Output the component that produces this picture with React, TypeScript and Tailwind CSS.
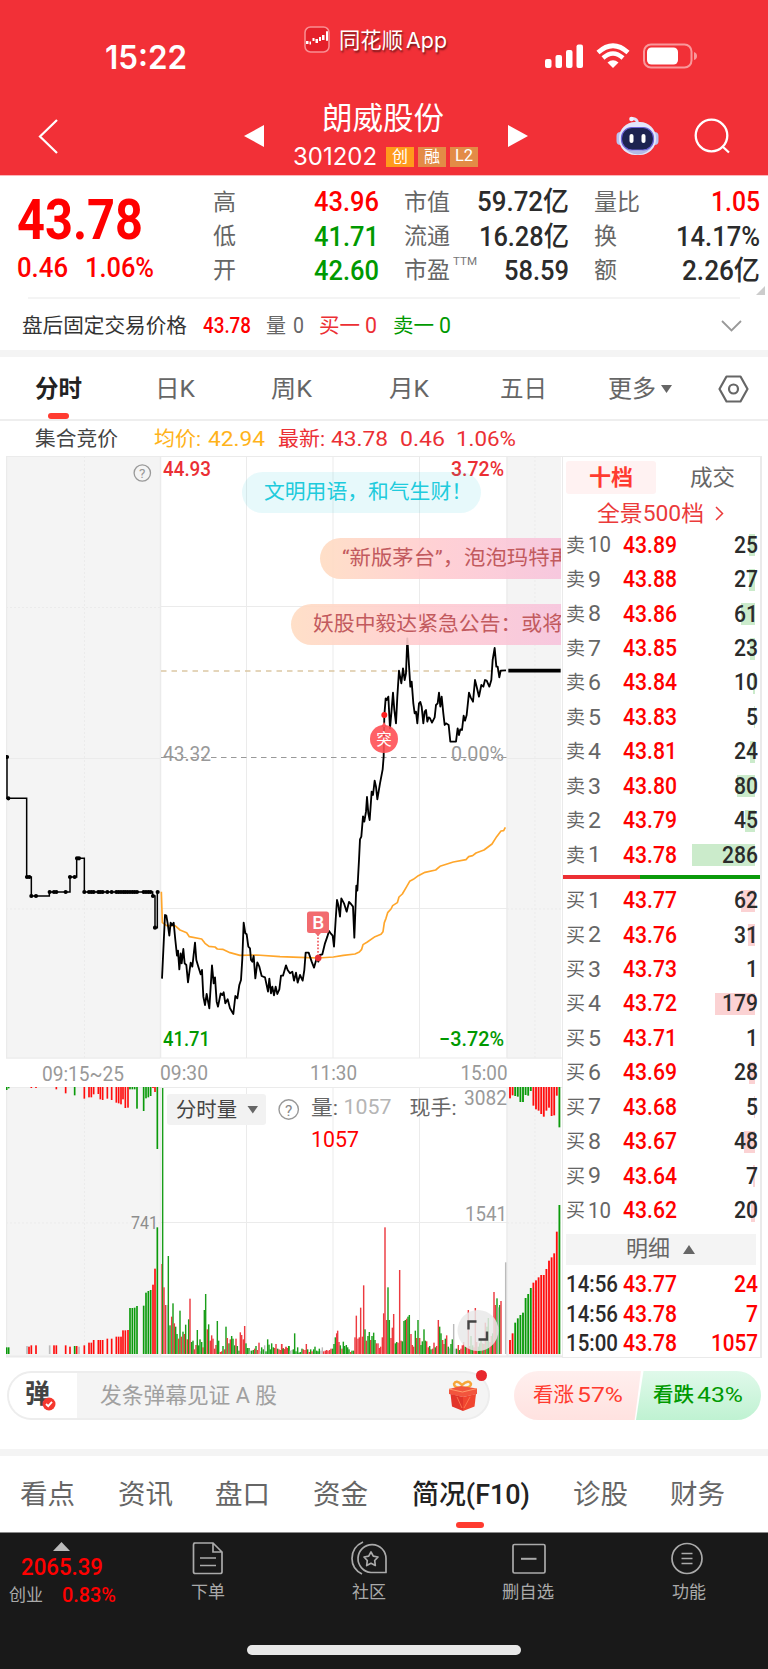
import { useLayoutEffect, useRef, useState, type ReactNode } from "react";

/** Single-line text squeezed or stretched to the width of its box. */
function Fit({ className = "", children }: { className?: string; children: ReactNode }) {
  const outer = useRef<HTMLSpanElement>(null);
  const inner = useRef<HTMLSpanElement>(null);
  const [scale, setScale] = useState(1);
  useLayoutEffect(() => {
    if (outer.current && inner.current && inner.current.offsetWidth) {
      setScale(outer.current.offsetWidth / inner.current.getBoundingClientRect().width);
    }
  }, []);
  return (
    <span ref={outer} className={`block shrink-0 whitespace-nowrap leading-none ${className}`}>
      <span ref={inner} className="inline-block origin-left" style={{ transform: `scaleX(${scale})` }}>
        {children}
      </span>
    </span>
  );
}

function StatusIcons() {
  return (
    <svg className="h-[26px] w-[153px]" viewBox="0 0 153 26" fill="none">
      <g fill="#fff">
        <rect x="0" y="16" width="6.5" height="9" rx="2" />
        <rect x="10.500" y="12" width="6.500" height="13" rx="2" />
        <rect x="21" y="7" width="6.500" height="18" rx="2" />
        <rect x="31.500" y="1.500" width="6.500" height="23.500" rx="2" />
        <path d="M68 25 L62.500 19.500 Q68 15 73.500 19.500 Z" />
      </g>
      <path d="M53 9.500 Q68 -4 83 9.500" stroke="#fff" strokeWidth="4.600" />
      <path d="M58 15 Q68 6 78 15" stroke="#fff" strokeWidth="4.400" />
      <rect x="99" y="1.500" width="47.500" height="23" rx="7" stroke="#fff" strokeOpacity=".5" strokeWidth="2" />
      <rect x="102" y="4.500" width="31" height="17" rx="4.500" fill="#fff" />
      <path d="M149 9 Q152 10 152 13 Q152 16 149 17 Z" fill="#fff" fillOpacity=".5" />
    </svg>
  );
}

function Robot() {
  return (
    <svg className="h-[40px] w-[43px]" viewBox="0 0 43 40" fill="none">
      <path d="M21 7 Q22 3 16 2.500" stroke="#dfe3fa" strokeWidth="3" strokeLinecap="round" />
      <circle cx="15.500" cy="3" r="2.300" fill="#eef0ff" />
      <rect x="0.500" y="16" width="8" height="13" rx="4" fill="#b9c3f1" />
      <rect x="34.500" y="16" width="8" height="13" rx="4" fill="#b9c3f1" />
      <rect x="3" y="6" width="37" height="33" rx="16" fill="#e3e6fb" />
      <path d="M6 29 Q12 38 22 38.500 Q32 38 37 29 Q30 35 21 35 Q12 35 6 29Z" fill="#b3b9e6" />
      <rect x="5.500" y="11.500" width="32" height="22.500" rx="10.500" fill="#1d2350" stroke="#6c63d8" strokeWidth="1.200" />
      <rect x="13.500" y="18" width="4" height="9" rx="2" fill="#fff" />
      <rect x="25.500" y="18" width="4" height="9" rx="2" fill="#fff" />
    </svg>
  );
}

function Header() {
  return (
    <header className="h-[176px] border-b border-[#fbb6ba] bg-[#f23037] text-white">
      <div className="flex h-[92px] items-start">
        <Fit className="mt-[42px] ml-[105px] w-[82px] font-['Inter'] text-[32px] font-semibold">15:22</Fit>
        <svg className="mt-[26px] ml-[117px] h-[27px] w-[26px]" viewBox="0 0 26 27">
          <rect x="1" y="1" width="24" height="25" rx="5.500" fill="#e5202a" stroke="#f98f93" strokeWidth="1.500" />
          <g fill="#fff">
            <rect x="2" y="15" width="2.500" height="3" />
            <rect x="5.500" y="15.500" width="1.500" height="3" />
            <rect x="8.500" y="12" width="2" height="3" />
            <rect x="11.500" y="13" width="2.500" height="4" />
            <rect x="15" y="11" width="2" height="4" />
            <rect x="18" y="9" width="2.500" height="5" />
            <rect x="22" y="5" width="2" height="10" rx="1" />
          </g>
        </svg>
        <div className="mt-[30px] ml-[9px] flex w-[108px] [text-shadow:1px_2px_2px_rgba(0,0,0,0.55)]">
          <Fit className="w-[64px] text-[21.5px]">同花顺</Fit>
          <Fit className="ml-[3px] w-[41px] font-['Inter'] text-[21.5px]">App</Fit>
        </div>
        <div className="mt-[43px] ml-[98px]"><StatusIcons /></div>
      </div>
      <div className="flex h-[83px] items-start">
        <svg className="mt-[27px] ml-[38px] h-[35px] w-[20px]" viewBox="0 0 20 35" fill="none" stroke="#fff" strokeWidth="2.200"><path d="M19 1 L2 17.500 L19 34" /></svg>
        <svg className="mt-[33px] ml-[186px] h-[22px] w-[20px]" viewBox="0 0 20 22" fill="#fff"><path d="M20 0 V22 L0 11Z" /></svg>
        <div className="ml-[29px] flex w-[186px] flex-col">
          <Fit className="mt-[12px] ml-[29px] w-[122px] text-[30.5px]">朗威股份</Fit>
          <div className="mt-[10px] flex items-center gap-[4px]">
            <Fit className="mr-[5px] w-[84px] font-['Inter'] text-[24px]">301202</Fit>
            <span className="flex h-[20px] w-[28px] items-center justify-center bg-[#ff9a1c] text-[16px] leading-none">创</span>
            <span className="flex h-[20px] w-[28px] items-center justify-center bg-[#e38b46] text-[16px] leading-none">融</span>
            <span className="flex h-[20px] w-[28px] items-center justify-center bg-[#e38b46] text-[16.5px] leading-none">L2</span>
          </div>
        </div>
        <svg className="mt-[33px] ml-[29px] h-[22px] w-[20px]" viewBox="0 0 20 22" fill="#fff"><path d="M0 0 V22 L20 11Z" /></svg>
        <div className="mt-[24px] ml-[88px]"><Robot /></div>
        <svg className="mt-[26px] ml-[35px] h-[37px] w-[37px]" viewBox="0 0 37 37" fill="none" stroke="#fff" strokeWidth="2.300"><circle cx="17.500" cy="17.500" r="15.800" /><path d="M28.500 28.500 L35 34.500" /></svg>
      </div>
    </header>
  );
}

const num = "text-[27.5px] font-medium";
const RED = "text-[#ff0000]";
const GREEN = "text-[#009900]";
const DARK = "text-[#2b2b2b]";

function Row({ label, w, value, vw, color, sup }: { label: string; w: string; value: string; vw: string; color: string; sup?: string }) {
  return (
    <div className="flex h-[34.300px] items-center justify-between">
      <div className="flex items-start">
        <Fit className={`${w} text-[23px] text-[#666]`}>{label}</Fit>
        {sup && <Fit className="-mt-[3px] ml-[3px] w-[24px] text-[11.5px] text-[#777]">{sup}</Fit>}
      </div>
      <Fit className={`${vw} ${num} ${color}`}>{value}</Fit>
    </div>
  );
}

function Quote() {
  return (
    <section>
      <div className="flex h-[121px]">
        <div className="w-[213px] pl-[17px]">
          <Fit className="mt-[17px] w-[126px] text-[55px] font-bold text-[#ff0000]">43.78</Fit>
          <div className="mt-[6px] flex">
            <Fit className={`w-[51px] ${num} ${RED}`}>0.46</Fit>
            <Fit className={`ml-[17px] w-[69px] ${num} ${RED}`}>1.06%</Fit>
          </div>
        </div>
        <div className="mt-[9px] w-[166px]">
          <Row label="高" w="w-[23px]" value="43.96" vw="w-[65px]" color={RED} />
          <Row label="低" w="w-[23px]" value="41.71" vw="w-[65px]" color={GREEN} />
          <Row label="开" w="w-[23px]" value="42.60" vw="w-[65px]" color={GREEN} />
        </div>
        <div className="mt-[9px] ml-[25px] w-[165px]">
          <Row label="市值" w="w-[46px]" value="59.72亿" vw="w-[92px]" color={DARK} />
          <Row label="流通" w="w-[46px]" value="16.28亿" vw="w-[90px]" color={DARK} />
          <Row label="市盈" w="w-[46px]" value="58.59" vw="w-[65px]" color={DARK} sup="TTM" />
        </div>
        <div className="mt-[9px] ml-[25px] w-[166px]">
          <Row label="量比" w="w-[46px]" value="1.05" vw="w-[49px]" color={RED} />
          <Row label="换" w="w-[23px]" value="14.17%" vw="w-[84px]" color={DARK} />
          <Row label="额" w="w-[23px]" value="2.26亿" vw="w-[78px]" color={DARK} />
        </div>
        <svg className="mt-[110px] h-[9px] w-[9px] -ml-[4px]" viewBox="0 0 9 9"><path d="M9 0 V9 H0Z" fill="#ccc" /></svg>
      </div>
      <div className="mx-[28px] h-[2px] bg-[#f4f4f4]" />
      <div className="flex h-[51px] items-center pt-[3px] pl-[22px] text-[21.5px]">
        <Fit className="w-[165px] text-[20.5px] text-[#333]">盘后固定交易价格</Fit>
        <Fit className={`ml-[16px] w-[48px] font-medium ${RED}`}>43.78</Fit>
        <Fit className="ml-[15px] w-[20px] text-[20px] text-[#666]">量</Fit>
        <Fit className="ml-[7px] w-[11px] text-[#666]">0</Fit>
        <Fit className="ml-[15px] w-[41px] text-[20.5px] text-[#ec2f34]">买一</Fit>
        <Fit className="ml-[5px] w-[12px] text-[#ec2f34]">0</Fit>
        <Fit className={`ml-[16px] w-[41px] text-[20.5px] ${GREEN}`}>卖一</Fit>
        <Fit className={`ml-[5px] w-[12px] ${GREEN}`}>0</Fit>
        <svg className="ml-[270px] h-[12px] w-[21px]" viewBox="0 0 21 12" fill="none" stroke="#999" strokeWidth="1.800"><path d="M1 1 L10.500 10.500 L20 1" /></svg>
      </div>
      <div className="h-[7px] bg-[#f4f4f4]" />
    </section>
  );
}

function PeriodTabs() {
  return (
    <nav className="relative flex h-[64px] items-center border-b-2 border-[#eee] pt-[2px] text-[24px] text-[#666]">
      <Fit className="ml-[35px] w-[47px] font-bold text-[#222]">分时</Fit>
      <Fit className="ml-[73px] w-[40px]">日K</Fit>
      <Fit className="ml-[76px] w-[41px]">周K</Fit>
      <Fit className="ml-[77px] w-[40px]">月K</Fit>
      <Fit className="ml-[71px] w-[47px]">五日</Fit>
      <Fit className="ml-[61px] w-[48px]">更多</Fit>
      <svg className="ml-[5px] h-[8px] w-[11px]" viewBox="0 0 11 8" fill="#666"><path d="M0 0 H11 L5.500 8Z" /></svg>
      <svg className="ml-[46px] h-[28px] w-[31px]" viewBox="0 0 31 28" fill="none" stroke="#666" strokeWidth="2.200"><path d="M8.500 1.500 H22.500 L29.500 14 L22.500 26.500 H8.500 L1.500 14Z" strokeLinejoin="round" /><circle cx="15.500" cy="14" r="4.500" /></svg>
      <span className="absolute bottom-0 left-[48px] h-[6px] w-[21px] rounded-[3px] bg-[#ff3b30]" />
    </nav>
  );
}

function Legend() {
  return (
    <div className="flex h-[35px] items-center pt-[2px] text-[20.5px]">
      <Fit className="ml-[35px] w-[83px] text-[#444]">集合竞价</Fit>
      <Fit className="ml-[36px] w-[47px] text-[#ffb31a]">均价:</Fit>
      <Fit className="ml-[7px] w-[57px] text-[21px] text-[#ffb31a]">42.94</Fit>
      <Fit className="ml-[13px] w-[47px] text-[#eb2f34]">最新:</Fit>
      <Fit className="ml-[6px] w-[57px] text-[21px] text-[#eb2f34]">43.78</Fit>
      <Fit className="ml-[12px] w-[45px] text-[21px] text-[#eb2f34]">0.46</Fit>
      <Fit className="ml-[11px] w-[60px] text-[21px] text-[#eb2f34]">1.06%</Fit>
    </div>
  );
}

const COLORS: Record<string, string> = { r: "#ff0d0d", g: "#0a9a0a", y: "#bbbbbb" };
const SOFT: Record<string, string> = { r: "#ec3a40", g: "#1a9e1a", y: "#bbbbbb" };

/* Each entry: x, y and colour key (r up, g down, y flat), in thirds of a pixel. */
const auctionLow =
  "20,862g 26,862g 81,858y 87,860r 94,856r 108,856r 149,856y 162,856r 169,856r 197,856r 210,860r 224,858g 230,858r 237,860y 253,856r 267,848r 274,848r 281,840r 295,840r 301,840r 308,840r 322,836r 335,836r 349,830r 356,830r 363,830r 369,811r 376,811r 384,810r 390,744g 397,744g 404,743g 411,738g 431,737g 438,698g 445,693g 452,690g 459,674r 465,626r 472,502g";
const auctionHigh =
  "20,90g 26,85g 94,84r 108,84r 169,88r 197,100r 224,106g 253,116r 267,112r 274,112r 281,103r 295,102r 301,118r 308,120r 322,116r 335,120r 349,128r 356,130r 363,133r 369,118r 376,144r 384,143r 390,88g 397,88g 404,88g 411,146g 431,153g 438,115g 445,112g 452,108g 459,84r 465,96r 472,267g";
const volumeAm =
  "486,612r 488,84g 492,682r 497,735r 501,735y 505,588g 510,796g 515,770r 519,730g 523,790r 527,800g 531,822g 536,836r 540,752g 544,830r 549,815g 553,822r 557,794g 562,838r 566,778g 570,716r 575,846g 579,842g 583,868r 588,855r 592,810g 596,856g 600,838g 605,846g 609,862r 613,750g 617,702g 622,808r 626,793g 631,842r 635,826r 639,836r 644,866r 648,855r 652,783g 656,842g 661,876r 665,874r 669,858g 674,868r 678,800g 682,834r 687,850g 691,838r 695,828g 699,836g 704,856g 708,836r 712,858g 717,872g 721,817r 725,825r 730,838r 734,798r 738,850g 742,864g 747,864g 751,872y 755,872g 760,870g 764,866r 768,858g 772,870r 777,848r 781,874y 785,862g 790,868g 794,856y 798,874g 803,838g 807,854g 811,868g 815,850g 820,862g 824,864r 828,852r 833,866g 837,868r 841,870r 845,852r 850,864r 854,868g 858,860r 862,864r 866,858g";
const volumePm =
  "5,852r 9,866g 14,868r 18,862r 22,872r 27,858g 31,872y 36,870y 40,868g 44,820g 48,874g 53,862g 57,878g 61,876g 66,866g 70,868r 75,870r 79,852r 83,868g 88,876r 92,868g 96,874r 101,868g 105,860g 110,872g 114,874g 118,866g 123,872y 127,862y 131,874r 136,872r 140,870r 144,872r 149,870r 153,866r 158,866g 162,852g 166,832g 170,820r 173,812r 177,846r 181,856g 186,866r 190,845g 194,858g 199,855g 203,862g 207,868g 212,876r 216,872g 221,872g 225,832r 229,767r 234,836r 238,832r 242,743r 247,830r 251,676r 255,808g 259,842r 264,828g 268,816g 272,840r 276,828g 281,818g 285,840g 289,850r 294,850r 298,864r 302,860r 307,832r 311,760r 315,502r 320,780r 324,682g 328,780g 333,834r 337,803r 341,762r 346,850g 350,846g 354,848r 359,630r 363,842r 367,844g 372,783g 376,780g 380,776r 384,770g 388,765g 393,822r 397,855r 401,860r 406,812g 410,834r 414,780g 419,834r 423,855g 427,844g 432,808g 436,842g 440,844r 445,862r 449,858g 453,868g 458,866r 462,848r 466,862g 470,858r 475,780r 479,800g 483,820g 488,840r 492,852r 496,836g 500,826r 505,860g 509,865y 513,852g 517,838g 521,792y 526,866y 530,866g 535,855r 539,870g 543,866r 547,856r 551,846r 556,860g 560,862r 565,750r 569,858r 573,828g 578,856g 582,862r 586,744r 590,846r 595,860g 599,850g 603,840g 608,850r 612,852g 616,788r 621,800g 625,774g 630,846r 634,828r 638,820g 642,696r 646,735r 651,715g 655,742y 659,735g 663,723r 677,607y";
const closeLow = "840r 820r 788g 775g 765g 758g 714g 702g 684g 668r 661r 652r 645r 645r 627r 602r 592r 580r 515r 435g";
const closeHigh = "115r 106r 108g 110g 126g 126g 105g 107g 93g 137r 148r 152r 162r 170r 152r 143r 168r 166r 107r 202g";

const parse = (s: string) =>
  s.split(" ").map((t) => {
    const [x, y] = t.slice(0, -1).split(",").map(Number);
    return { x, y, c: t[t.length - 1] };
  });
const parseStep = (s: string) => s.split(" ").map((t, i) => ({ x: 690 + i * 7.8, y: parseInt(t, 10), c: t[t.length - 1] }));

function Bars({ data, w, from, palette }: { data: { x: number; y: number; c: string }[]; w: number; from: number; palette: Record<string, string> }) {
  return (
    <>
      {data.map((d, i) => (
        <rect key={i} x={d.x - w / 2} y={Math.min(d.y, from)} width={w} height={Math.abs(from - d.y)} fill={palette[d.c]} />
      ))}
    </>
  );
}

const auctionDots: [number, number][] = [
  [21, 51], [25, 175], [81, 411], [88, 411], [94, 468], [108, 468], [149, 456], [162, 456], [169, 456], [197, 456], [210, 411], [224, 411], [231, 355], [237, 355], [253, 456],
  [267, 456], [274, 456], [281, 456], [295, 456], [301, 456], [308, 456], [322, 456], [335, 456], [349, 456], [356, 456], [363, 456], [370, 456], [376, 456], [383, 456], [390, 456], [397, 456], [404, 456], [411, 456], [431, 456], [438, 456], [445, 456], [452, 456], [459, 468], [465, 563], [473, 456],
];

function T({ x, y, w, size, fill, weight = 400, children }: { x: number; y: number; w: number; size: number; fill: string; weight?: number; children: string }) {
  return (
    <text x={x} y={y} textLength={w} lengthAdjust="spacingAndGlyphs" fontSize={size} fill={fill} fontWeight={weight}>
      {children}
    </text>
  );
}

function Chart() {
  return (
    <svg className="block h-[902px] w-[556px]" viewBox="6 456 556 902" fill="none">
      <rect x="6" y="456" width="154" height="603" fill="#f4f4f4" />
      <rect x="507" y="456" width="54" height="603" fill="#f4f4f4" />
      <rect x="6" y="1087" width="154" height="269" fill="#f4f4f4" />
      <rect x="507" y="1087" width="54" height="269" fill="#f4f4f4" />
      <g stroke="#ebebeb" strokeWidth="1">
        <path d="M6 456.500H562 M6 1058H562 M160 606.500H507 M160 908.500H507 M6 758.500H160 M507 758.500H562 M6 1087.500H562 M160 1222.500H507" />
        <path d="M246.500 456V1058 M333 456V1058 M419.500 456V1058 M246.500 1087V1356 M333 1087V1356 M419.500 1087V1356" />
        <path d="M160.500 456V1058 M507 456V1058 M160.500 1087V1356 M507 1087V1356 M6.500 456V1058 M6.500 1087V1356" strokeWidth="1.500" />
        <path d="M84.500 456V1058 M84.500 1087V1356 M535 456V1058 M535 1087V1356 M6 607.500H160 M6 909H160 M507 607.500H562 M507 909H562 M6 1223H160 M507 1223H562" strokeDasharray="2 2" />
      </g>
      <path d="M6 1356.500H562" stroke="#eaeaea" strokeWidth="2" />

      <path d="M161 671H507" stroke="#dcc7a4" strokeWidth="1.500" strokeDasharray="5.500 5" />
      <path d="M161 757.500H507" stroke="#999" strokeWidth="1.200" strokeDasharray="5.500 4.500" />

      <T x={163} y={475.500} w={48} size={20.500} fill="#eb2f34" weight={500}>44.93</T>
      <T x={451} y={475.500} w={53} size={20.500} fill="#eb2f34" weight={500}>3.72%</T>
      <T x={163} y={760.500} w={48} size={20.500} fill="#999">43.32</T>
      <T x={451} y={760.500} w={53} size={20.500} fill="#999">0.00%</T>
      <T x={163} y={1045.500} w={47} size={20.500} fill="#009900" weight={500}>41.71</T>
      <T x={439} y={1045.500} w={65} size={20.500} fill="#009900" weight={500}>−3.72%</T>

      <circle cx="142.300" cy="473" r="8.200" stroke="#999" strokeWidth="1.300" />
      <text x="142.300" y="478" textAnchor="middle" fontSize="13.500" fill="#999">?</text>

      <g transform="translate(0 740) scale(.33333)">
        <path
          d="M484 455L487 548L500 557H525L540 570L560 578L568 590L605 597L615 610L627 619L645 621L652 627L668 628L690 638L720 646L770 645L840 650L900 652L955 654L1000 651L1030 646L1065 642L1078 636L1085 628L1089 614L1102 606L1125 590L1143 583L1149 575L1153 548L1158 535L1163 518L1173 507L1178 497L1192 488L1197 471L1207 462L1220 440L1229 424L1240 418L1255 407L1275 397L1307 390L1320 379L1360 366L1398 359L1406 350L1418 347L1428 339L1452 330L1476 312L1490 290L1503 273L1511 272L1516 262"
          stroke="#ffa62b" strokeWidth="5" strokeLinejoin="round"
        />
        <g stroke="#000" strokeWidth="4.500">
          <path d="M21 51V175H80V411H94V468H148V456H210V411H230V355H253V456H458V468H465V563H472V456" />
          {auctionDots.map(([x, y]) => (
            <circle key={`${x}-${y}`} cx={x} cy={y} r="4" fill="#000" />
          ))}
        </g>
        <path
          d="M486 716L495 525L499 527L503 550L508 587L512 548L516 556L521 548L526 600L531 647L534 632L538 688L542 640L545 670L550 627L554 670L559 675L564 727L572 668L577 680L585 608L589 660L595 680L602 703L606 690L610 770L615 795L620 762L628 805L636 676L641 730L645 712L650 785L654 800L662 760L667 765L671 757L676 790L683 778L690 805L700 822L706 768L712 775L718 735L723 720L727 655L731 548L736 580L740 583L745 620L750 625L753 660L757 665L761 648L766 715L772 667L778 680L785 708L795 712L804 755L808 716L813 760L817 740L822 766L827 740L832 762L838 748L843 707L849 707L858 676L863 690L870 700L877 695L882 722L888 698L893 728L900 705L908 722L913 690L917 638L926 638L935 665L942 683L950 655L955 665L960 645L967 643L975 610L982 590L987 573L992 580L998 587L1002 620L1007 540L1011 480L1015 495L1020 530L1024 475L1032 490L1040 515L1047 486L1053 492L1059 500L1063 593L1069 437L1072 452L1077 360L1080 298L1084 290L1089 229L1093 245L1098 215L1101 171L1105 220L1109 240L1115 155L1119 165L1124 122L1128 140L1132 178L1140 130L1148 88L1151 50L1153 -74L1157 -125L1160 -120L1165 -130L1170 -35L1174 -80L1179 -142L1183 -90L1188 -50L1192 -130L1197 -208L1204 -170L1209 -215L1214 -180L1218 -200L1222 -305L1226 -240L1231 -160L1235 -175L1240 -110L1244 -80L1248 -85L1252 -50L1257 -110L1261 -114L1265 -100L1270 -50L1274 -85L1278 -90L1282 -55L1286 -68L1290 -65L1296 -52L1304 -68L1308 -105L1313 -110L1317 -142L1321 -100L1325 -130L1330 -80L1334 -45L1338 -50L1346 -45L1351 5H1368L1373 -35L1377 -15L1381 -32L1386 -30L1391 -73L1395 -58L1400 -75L1407 -142L1412 -128L1419 -115L1425 -180L1430 -160L1437 -130L1444 -165L1450 -160L1455 -180L1460 -178L1468 -160L1474 -180L1478 -240L1484 -276L1489 -220L1493 -220L1498 -188L1502 -208L1518 -209"
          stroke="#000" strokeWidth="5.500" strokeLinejoin="round"
        />
        <path d="M1525 -208H1682" stroke="#000" strokeWidth="11" />
      </g>

      <circle cx="384.300" cy="715" r="3" fill="#ff2020" />
      <path d="M381 727L384 722L387 727Z" fill="#ff5b5e" />
      <circle cx="384" cy="739" r="14" fill="#ff5055" fillOpacity=".9" />
      <text x="384" y="744.500" textAnchor="middle" fontSize="15.500" fill="#fff">突</text>

      <path d="M318 934V956" stroke="#ec3a40" strokeWidth="1.400" strokeDasharray="1.700 1.700" />
      <circle cx="318.200" cy="958" r="3.300" fill="#e53238" />
      <path d="M309.500 911.500H326.500Q329 911.500 329 914V930.500Q329 933 326.500 933H321L318 936L315 933H309.500Q307 933 307 930.500V914Q307 911.500 309.500 911.500Z" fill="#f26b6f" />
      <text x="318.200" y="929" textAnchor="middle" fontSize="19" fontWeight="500" fill="#fff">B</text>

      <T x={42} y={1080.500} w={82} size={20} fill="#999">09:15~25</T>
      <T x={160} y={1079.500} w={48} size={20} fill="#999">09:30</T>
      <T x={310} y={1079.500} w={47} size={20} fill="#999">11:30</T>
      <T x={460.500} y={1079.500} w={47} size={20} fill="#999">15:00</T>
      <T x={464} y={1104.500} w={43} size={19.500} fill="#999">3082</T>
      <T x={465} y={1220.500} w={42} size={19.500} fill="#999">1541</T>
      <T x={131} y={1228.500} w={27} size={18} fill="#8d8d8d">741</T>

      <g transform="translate(0 1060) scale(.33333)">
        <Bars data={parse(auctionHigh)} w={5} from={81} palette={COLORS} />
        <Bars data={parse(auctionLow)} w={5} from={882} palette={COLORS} />
        <Bars data={parse(volumeAm)} w={4.300} from={882} palette={SOFT} />
      </g>
      <g transform="translate(280 1060) scale(.33333)">
        <Bars data={parse(volumePm)} w={4.300} from={882} palette={SOFT} />
        <Bars data={parseStep(closeHigh)} w={5.500} from={81} palette={COLORS} />
        <Bars data={parseStep(closeLow)} w={5.500} from={882} palette={COLORS} />
      </g>

      <rect x="167" y="1094" width="99" height="31" rx="3" fill="#f2f2f2" />
      <T x={176} y={1117} w={61} size={20.500} fill="#444">分时量</T>
      <path d="M247.500 1106H258L252.800 1113.500Z" fill="#666" />
      <circle cx="288.700" cy="1109.500" r="9.700" stroke="#999" strokeWidth="1.400" />
      <text x="288.700" y="1115.500" textAnchor="middle" fontSize="15.500" fill="#888">?</text>
      <T x={311} y={1114.500} w={27} size={20.500} fill="#666">量:</T>
      <T x={343.500} y={1114} w={48} size={21} fill="#b5b5b5">1057</T>
      <T x={409.500} y={1114.500} w={47} size={20.500} fill="#666">现手:</T>
      <T x={311} y={1147} w={48} size={21.500} fill="#ff0000">1057</T>

      <circle cx="478" cy="1330.500" r="20.500" fill="#e9e9e9" fillOpacity=".85" />
      <path d="M468.500 1329.500V1321.500H476.500 M487 1331.500V1339.500H478.500" stroke="#444" strokeWidth="2.400" />
    </svg>
  );
}

const asks: [string, string, number][] = [
  ["10", "43.89", 25], ["9", "43.88", 27], ["8", "43.86", 61], ["7", "43.85", 23], ["6", "43.84", 10],
  ["5", "43.83", 5], ["4", "43.81", 24], ["3", "43.80", 80], ["2", "43.79", 45], ["1", "43.78", 286],
];
const bids: [string, string, number][] = [
  ["1", "43.77", 62], ["2", "43.76", 31], ["3", "43.73", 1], ["4", "43.72", 179], ["5", "43.71", 1],
  ["6", "43.69", 28], ["7", "43.68", 5], ["8", "43.67", 48], ["9", "43.64", 7], ["10", "43.62", 20],
];
const trades: [string, string, number][] = [["14:56", "43.77", 24], ["14:56", "43.78", 7], ["15:00", "43.78", 1057]];
const qtyWidth = ["", "w-[12px]", "w-[24px]", "w-[36px]", "w-[47px]"];

function Level({ side, row, bar }: { side: string; row: [string, string, number]; bar: string }) {
  const [level, price, qty] = row;
  return (
    <div className="relative flex h-[34.440px] items-center">
      <span
        className={`absolute top-1/2 right-[5px] h-[22px] -translate-y-1/2 ${bar}`}
        style={{ width: qty < 3 ? 0 : Math.max(1, qty * 0.222) }}
      />
      <Fit className="ml-[3px] w-[19px] text-[19px] text-[#666]">{side}</Fit>
      <Fit className={`ml-[3px] text-[21.5px] text-[#666] ${level.length > 1 ? "w-[23px]" : "w-[13px]"}`}>{level}</Fit>
      <div className={level.length > 1 ? "w-[12px]" : "w-[22px]"} />
      <Fit className="relative w-[54px] text-[23px] font-medium text-[#ff0000]">{price}</Fit>
      <Fit className={`relative mr-[2px] ml-auto text-[23px] font-medium text-[#2b2b2b] ${qtyWidth[String(qty).length]}`}>{qty}</Fit>
    </div>
  );
}

function OrderBook() {
  return (
    <aside className="h-[902px] w-[200px] border-y border-r-2 border-l border-[#eaeaea]">
      <div className="flex pt-[4px] text-[22px]">
        <div className="ml-[3px] flex h-[33px] w-[90px] items-center justify-center rounded-[3px] bg-[#fff2f2]">
          <Fit className="w-[44px] font-bold text-[#ff3b30]">十档</Fit>
        </div>
        <div className="flex h-[33px] flex-1 items-center pl-[34px]"><Fit className="w-[45px] text-[#666]">成交</Fit></div>
      </div>
      <div className="flex h-[33px] items-center pt-[6px] pl-[34px]">
        <Fit className="w-[107px] text-[22px] text-[#eb3a3a]">全景500档</Fit>
        <svg className="ml-[11px] h-[15px] w-[9px]" viewBox="0 0 9 15" fill="none" stroke="#eb3a3a" strokeWidth="1.500"><path d="M1 1L7.500 7.500L1 14" /></svg>
      </div>
      <div className="h-px" />
      {asks.map((r) => (
        <Level key={r[0]} side="卖" row={r} bar="bg-[#cbebcb]" />
      ))}
      <div className="mt-[3px] mb-[4px] flex h-[4px]">
        <div className="w-[77px] bg-[#ec2f34]" />
        <div className="flex-1 bg-[#0a9a0a]" />
      </div>
      {bids.map((r) => (
        <Level key={r[0]} side="买" row={r} bar="bg-[#fbd2d3]" />
      ))}
      <div className="mt-[6px] mr-[4px] ml-[3px] flex h-[31px] items-center bg-[#f4f4f4]">
        <Fit className="ml-[60px] w-[44px] text-[22px] text-[#666]">明细</Fit>
        <svg className="ml-[13px] h-[9px] w-[12px]" viewBox="0 0 12 9" fill="#666"><path d="M6 0L12 9H0Z" /></svg>
      </div>
      <div className="pt-[5px]">
        {trades.map(([t, p, q], i) => (
          <div key={i} className="flex h-[29.500px] items-center text-[23px] font-medium text-[#ff0000]">
            <Fit className="ml-[3px] w-[52px] text-[#2b2b2b]">{t}</Fit>
            <Fit className="ml-[5px] w-[54px]">{p}</Fit>
            <Fit className={`mr-[2px] ml-auto ${qtyWidth[String(q).length]}`}>{q}</Fit>
          </div>
        ))}
      </div>
    </aside>
  );
}

function ChartSection() {
  return (
    <section className="flex h-[902px] pl-[6px]">
      <div className="relative w-[556px] overflow-hidden">
        <Chart />
        <div className="absolute top-[16px] left-[236px] flex h-[41px] w-[239px] items-center rounded-full bg-[#12c8dc]/10 pl-[22px]">
          <Fit className="w-[208px] text-[20.800px] text-[#20cbdc]">文明用语，和气生财！</Fit>
        </div>
        <div className="absolute top-[82px] left-[314px] h-[41px] w-[241px] overflow-hidden rounded-l-full bg-linear-to-r from-[#ffdcc2]/90 via-[#ffcbd0]/90 to-[#f7c3dc]/90 pt-[10px] pl-[22px]">
          <Fit className="w-[229px] text-[20.800px] text-[#c25a5e]">“新版茅台”，泡泡玛特再</Fit>
        </div>
        <div className="absolute top-[148px] left-[285px] h-[41px] w-[270px] overflow-hidden rounded-l-full bg-linear-to-r from-[#ffdcc2]/90 via-[#ffcbd0]/90 to-[#f7c3dc]/90 pt-[10px] pl-[22px]">
          <Fit className="w-[250px] text-[20.800px] text-[#c25a5e]">妖股中毅达紧急公告：或将</Fit>
        </div>
      </div>
      <OrderBook />
    </section>
  );
}

function Gift() {
  return (
    <svg className="h-[31px] w-[30px]" viewBox="0 0 30 31">
      <path d="M14 8Q6 8 6 4Q8 -1 14 5Q21 -1 23 4Q23 8 14 8Z" fill="none" stroke="#f6a53a" strokeWidth="2.500" />
      <path d="M1 9L13 6L29 8.500V14L15 17L1 14Z" fill="#f2553d" />
      <path d="M2.500 14L15 17V31L4 26.500Z" fill="#e2352a" />
      <path d="M28 14L15 17V31L26.500 26.500Z" fill="#f0452f" />
      <path d="M1 9L14.500 12L29 8.500" stroke="#ff9a6b" fill="none" />
      <path d="M9 17L14 28M22 17L16 28" stroke="#ff8a5b" strokeWidth="1" strokeOpacity=".7" />
    </svg>
  );
}

function CommentBar() {
  return (
    <section className="flex h-[91px] pt-[13px] pl-[7px]">
      <div className="relative flex h-[49px] w-[483px] items-center rounded-full border-2 border-[#ededed] bg-[#f4f4f4]">
        <div className="relative flex h-full w-[68px] items-center rounded-l-full bg-white pb-[3px] pl-[16px]">
          <Fit className="w-[25px] text-[26px] font-bold text-[#444]">弹</Fit>
          <svg className="absolute top-[24px] left-[33px] h-[14px] w-[14px]" viewBox="0 0 14 14"><circle cx="7" cy="7" r="6.500" fill="#f5382e" /><path d="M4 7L6.200 9.200L10 4.800" fill="none" stroke="#fff" strokeWidth="1.800" /></svg>
        </div>
        <Fit className="ml-[23px] w-[177px] text-[22px] text-[#a0a0a0]">发条弹幕见证 A 股</Fit>
        <div className="ml-[171px]"><Gift /></div>
        <span className="absolute -top-[3px] right-[1px] h-[11px] w-[11px] rounded-full bg-[#e8282e]" />
      </div>
      <div className="ml-[24px] flex">
        <div className="flex h-[49px] w-[127px] items-center rounded-l-full bg-linear-to-b from-[#ffefee] to-[#ffe2e0] pl-[19px] text-[#ff3b30] [clip-path:polygon(0_0,100%_0,95%_100%,0_100%)]">
          <Fit className="w-[41px] text-[20.500px]">看涨</Fit>
          <Fit className="ml-[3px] w-[46px] text-[21px]">57%</Fit>
        </div>
        <div className="-ml-[5px] flex h-[49px] w-[125px] items-center rounded-r-full bg-linear-to-b from-[#e0f9ea] to-[#bff2d2] pl-[17px] text-[#009900] [clip-path:polygon(6%_0,100%_0,100%_100%,0_100%)]">
          <Fit className="w-[41px] text-[20.500px] font-medium">看跌</Fit>
          <Fit className="ml-[3px] w-[46px] text-[21px]">43%</Fit>
        </div>
      </div>
    </section>
  );
}

function SectionTabs() {
  return (
    <nav className="relative flex h-[76px] items-center pt-[2px] pl-[20px] text-[27.500px] text-[#666]">
      <Fit className="w-[55px]">看点</Fit>
      <Fit className="ml-[43px] w-[55px]">资讯</Fit>
      <Fit className="ml-[42px] w-[55px]">盘口</Fit>
      <Fit className="ml-[43px] w-[55px]">资金</Fit>
      <Fit className="ml-[44px] w-[118px] font-medium text-[#222]">简况(F10)</Fit>
      <Fit className="ml-[43px] w-[55px]">诊股</Fit>
      <Fit className="ml-[42px] w-[55px]">财务</Fit>
      <span className="absolute top-[66px] left-[456px] h-[6px] w-[28px] rounded-[3px] bg-[#ff3b30]" />
    </nav>
  );
}

function BottomBar() {
  const icon = "h-[34px] w-[38px]";
  return (
    <footer className="flex h-[137px] flex-col border-t border-[#8a8a8a] bg-[#191919] text-[#aaa]">
      <div className="flex h-[112px] items-start text-[17.500px]">
        <div className="w-[125px] pl-[9px]">
          <svg className="mt-[9px] ml-[44px] block h-[9px] w-[17px]" viewBox="0 0 17 9" fill="#bbb"><path d="M8.500 0L17 9H0Z" /></svg>
          <Fit className="mt-[4px] ml-[12px] w-[82px] text-[24.500px] font-medium text-[#ff0000]">2065.39</Fit>
          <div className="mt-[5px] flex items-center">
            <Fit className="w-[34px] pt-[2px] text-[17px]">创业</Fit>
            <Fit className="ml-[19px] w-[54px] text-[20px] font-medium text-[#ff0000]">0.83%</Fit>
          </div>
        </div>
        <div className="ml-[43px] flex w-[80px] flex-col items-center pt-[8px]">
          <svg className={icon} viewBox="0 0 38 34" fill="none" stroke="#aaa" strokeWidth="1.700"><path d="M4.500 2H24L33 11V31Q33 32.500 31 32.500H6.500Q4.500 32.500 4.500 31V4Q4.500 2 6.500 2M24 2V11H33M11 17H27M11 24.500H27" /></svg>
          <Fit className="mt-[9px] w-[34px] text-[17.500px]">下单</Fit>
        </div>
        <div className="ml-[81px] flex w-[80px] flex-col items-center pt-[8px]">
          <svg className={icon} viewBox="0 0 38 34" fill="none" stroke="#aaa" strokeWidth="1.700"><path d="M36 31.500H21A14 14 0 1 1 36 17.500ZM13 1Q2 6 2 17.500Q2 28 12 33M21 11L23.300 15.200L28 16L24.700 19.500L25.300 24.500L21 22.300L16.700 24.500L17.300 19.500L14 16L18.700 15.200Z" strokeLinejoin="round" /></svg>
          <Fit className="mt-[9px] w-[34px] text-[17.500px]">社区</Fit>
        </div>
        <div className="ml-[79px] flex w-[80px] flex-col items-center pt-[8px]">
          <svg className={icon} viewBox="0 0 38 34" fill="none" stroke="#aaa" strokeWidth="1.700"><rect x="4" y="3.500" width="32" height="28.500" rx="1.500" /><path d="M12 17.800H27.500" strokeWidth="2" /></svg>
          <Fit className="mt-[9px] w-[52px] text-[17.500px]">删自选</Fit>
        </div>
        <div className="ml-[81px] flex w-[80px] flex-col items-center pt-[8px]">
          <svg className={icon} viewBox="0 0 38 34" fill="none" stroke="#aaa" strokeWidth="1.700"><circle cx="17" cy="17.500" r="15" /><path d="M11.500 12.500H22.500M11.500 17.500H22.500M11.500 22.500H22.500" /></svg>
          <Fit className="mt-[9px] w-[34px] text-[17.500px]">功能</Fit>
        </div>
      </div>
      <div className="ml-[247px] h-[10px] w-[274px] rounded-full bg-[#e8e8e8]" />
    </footer>
  );
}

export default function App() {
  return (
    <div className="h-[1669px] w-[768px] overflow-hidden bg-white font-['Roboto','Noto_Sans_CJK_SC',sans-serif]">
      <Header />
      <Quote />
      <PeriodTabs />
      <Legend />
      <ChartSection />
      <CommentBar />
      <div className="h-[7px] bg-[#f4f4f4]" />
      <SectionTabs />
      <BottomBar />
    </div>
  );
}
